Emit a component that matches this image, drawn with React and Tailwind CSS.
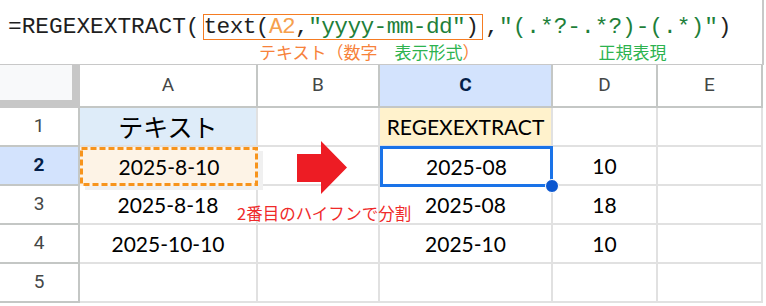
const mono = { fontFamily: '"Liberation Mono", "DejaVu Sans Mono", monospace' }

const headCell = 'flex items-center justify-center border-r-2 border-b-2 border-[#c4c7c5] text-[19px] text-[#444746]'
const rowHead = 'flex items-center justify-center border-r-2 border-b-2 border-[#c4c7c5] text-[19px] text-[#444746]'
const cell = 'flex items-center justify-center border-r-2 border-b-2 border-[#e1e1e1] text-[21px] text-black'

const rows = [
  { n: '1', a: 'テキスト', c: 'REGEXEXTRACT', d: '' },
  { n: '2', a: '2025-8-10', c: '2025-08', d: '10' },
  { n: '3', a: '2025-8-18', c: '2025-08', d: '18' },
  { n: '4', a: '2025-10-10', c: '2025-10', d: '10' },
  { n: '5', a: '', c: '', d: '' },
]

const App = () => {
  return (
    <div className="relative w-[766px] h-[306px] bg-white overflow-hidden font-['Roboto','Noto_Sans_CJK_JP',sans-serif]">
      {/* Formula bar */}
      <div className="w-[764px] h-[65px] border-r-2 border-b border-[#c8c8c8] bg-white">
        <div className="pl-[8px] pt-[14px] leading-[26px] whitespace-pre text-[22.8px] text-[#1f1f1f]" style={mono}>
          <span>=REGEXEXTRACT(</span>
          <span className="inline-block ml-[3px] pr-[4px] leading-[24px] border-[1.5px] border-[#f57c22] tracking-[-0.6px]">
            <span>text(</span>
            <span className="text-[#f6a04d]">A2</span>
            <span>,</span>
            <span className="text-[#1e7f3a]">"yyyy-mm-dd"</span>
            <span>)</span>
          </span>
          <span className="ml-[2px]">,</span>
          <span className="text-[#1e7f3a]">"(.*?-.*?)-(.*)"</span>
          <span>)</span>
        </div>
        <div className="flex pl-[259px] mt-[2px] leading-[20px] text-[17px] font-['Noto_Sans_CJK_JP',sans-serif]">
          <span className="text-[#f7823a]">テキスト（数字　</span>
          <span className="text-[#2db34f]">表示形式</span>
          <span className="text-[#f7823a]">）</span>
          <span className="ml-[119px] text-[#2db34f]">正規表現</span>
        </div>
      </div>

      {/* Grid */}
      <div className="grid grid-cols-[80px_178px_122px_173px_105px_105px] grid-rows-[43px_39px_39px_39px_39px_39px] font-['Lato','Noto_Sans_CJK_JP',sans-serif]">
        <div className="border-r-[8px] border-b-[8px] border-[#c7c7c7] bg-[#f8f9fa]" />
        <div className={headCell + " font-['Roboto'] bg-white"}>A</div>
        <div className={headCell + " font-['Roboto'] bg-white"}>B</div>
        <div className={headCell + " font-['Roboto'] bg-[#d3e3fd] font-bold !text-[#041e49]"}>C</div>
        <div className={headCell + " font-['Roboto'] bg-white"}>D</div>
        <div className={headCell + " font-['Roboto'] bg-white"}>E</div>

        {rows.map((r) => {
          const sel = r.n === '2'
          return [
            <div key={r.n + 'h'} className={rowHead + " font-['Roboto'] " + (sel ? 'bg-[#d3e3fd] font-bold !text-[#041e49]' : 'bg-white')}>{r.n}</div>,
            r.n === '1' ? (
              <div key={r.n + 'a'} className={cell + " bg-[#deecf9] text-[25px] font-['Noto_Sans_CJK_JP']"}>{r.a}</div>
            ) : sel ? (
              <div key={r.n + 'a'} className="relative flex items-center justify-center bg-[#fdf3e6] text-[21px] text-black shadow-[5px_4px_0_0_#f0f0f0] z-10">
                <svg className="absolute inset-0" width="178" height="39">
                  <rect x="1.5" y="1.5" width="175" height="36" fill="none" stroke="#f7941d" strokeWidth="3" strokeDasharray="6 3" />
                </svg>
                {r.a}
              </div>
            ) : (
              <div key={r.n + 'a'} className={cell}>{r.a}</div>
            ),
            <div key={r.n + 'b'} className={cell}></div>,
            r.n === '1' ? (
              <div key={r.n + 'c'} className={cell + ' bg-[#fff2cc]'}>{r.c}</div>
            ) : sel ? (
              <div key={r.n + 'c'} className="relative flex items-center justify-center -mt-[1px] h-[41px] border-[3px] border-[#1a73e8] text-[21px] text-black z-10">
                {r.c}
                <span className="absolute -right-[9px] -bottom-[9px] w-[14px] h-[14px] rounded-full bg-[#0b57d0] border border-white" />
              </div>
            ) : (
              <div key={r.n + 'c'} className={cell}>{r.c}</div>
            ),
            <div key={r.n + 'd'} className={cell}>{r.d}</div>,
            <div key={r.n + 'e'} className={cell}></div>,
          ]
        })}
      </div>

      {/* Arrow */}
      <svg className="absolute left-[297px] top-[141px]" width="51" height="54" viewBox="0 0 51 54">
        <polygon points="0,13 24,13 24,0 50,26.5 24,53 24,41 0,41" fill="#ed1c24" />
      </svg>

      {/* Note */}
      <div className="absolute left-[237px] top-[203px] text-[16.5px] leading-[20px] text-[#ef2a2a] font-['Noto_Sans_CJK_JP',sans-serif] whitespace-nowrap">
        2番目のハイフンで分割
      </div>
    </div>
  )
}

export default App
